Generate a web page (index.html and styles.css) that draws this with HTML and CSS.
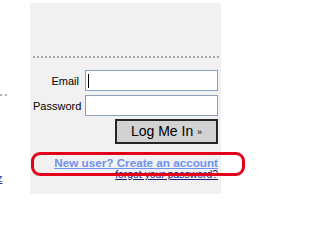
FILE: index.html
```html
<!DOCTYPE html>
<html>
<head>
<meta charset="utf-8">
<link rel="stylesheet" href="styles.css">
</head>
<body>
<div class="page">
  <div class="side">
    <div class="side-rule"></div>
    <div class="side-link"><a href="#">z</a></div>
  </div>
  <div class="panel">
    <div class="panel-top"></div>
    <div class="rule"></div>
    <form class="login">
      <label class="lbl">Email</label>
      <input class="field caret" type="text">
      <label class="lbl">Password</label>
      <input class="field" type="password">
      <span></span>
      <div class="btn-row"><button type="button" class="btn">Log Me In <span class="raq">&raquo;</span></button></div>
    </form>
    <div class="links">
      <a class="new-user" href="#">New user? Create an account</a>
      <a class="forgot" href="#">forgot your password?</a>
    </div>
  </div>
  <div class="highlight"></div>
</div>
</body>
</html>
```
FILE: styles.css
```css
html, body {
  margin: 0;
  padding: 0;
  background: #fff;
}
.page {
  position: relative;
  display: flex;
  align-items: flex-start;
  font-family: "Liberation Sans", Arial, sans-serif;
  font-size: 11px;
}
.side {
  width: 30px;
  height: 200px;
  overflow: hidden;
}
.side-rule {
  margin-top: 94px;
  width: 7px;
  border-top: 2px dotted #b0b0b0;
}
.side-link {
  margin-top: 76px;
  width: 3px;
  overflow: hidden;
  line-height: 13px;
}
.side-link a {
  color: #2a3a9a;
  margin-left: -3px;
}
.panel {
  margin-top: 3px;
  width: 185px;
  height: 191px;
  padding: 0 3px 0 3px;
  background: #f1f1f1;
}
.panel-top {
  height: 53px;
}
.rule {
  border-top: 2px dotted #a4a4a4;
  margin-right: -1px;
}
.login {
  margin: 12px 0 0 0;
  display: grid;
  grid-template-columns: 46px 133px;
  column-gap: 6px;
  row-gap: 4px;
  align-items: center;
}
.lbl {
  text-align: right;
  color: #000;
  font-size: 11px;
  white-space: nowrap;
}
.field {
  box-sizing: border-box;
  width: 133px;
  height: 21px;
  margin: 0;
  border: 1px solid #8aa1b8;
  background: #fff;
  padding: 0 3px;
}
.caret {
  background: #fff linear-gradient(#000, #000) no-repeat 2px 3px / 1px 14px;
}
.btn-row {
  display: flex;
  justify-content: flex-end;
  margin-top: -1px;
}
.btn {
  box-sizing: border-box;
  width: 103px;
  height: 25px;
  margin: 0;
  padding: 0;
  border: 2px solid #262626;
  background: #d2d2d2;
  color: #000;
  font-family: "Liberation Sans", Arial, sans-serif;
  font-size: 14px;
  line-height: 20px;
}
.raq {
  font-size: 9px;
  vertical-align: 1px;
}
.links {
  margin-top: 12px;
  display: flex;
  flex-direction: column;
  align-items: flex-end;
  line-height: 12px;
}
.new-user {
  color: #6d93ee;
  font-weight: bold;
  font-size: 11.7px;
  line-height: 13px;
}
.forgot {
  color: #1a1a7a;
  font-size: 10.4px;
}
.highlight {
  position: absolute;
  left: 31px;
  top: 152px;
  width: 208px;
  height: 18px;
  border: 3px solid #e3001b;
  border-radius: 9px;
}
```
